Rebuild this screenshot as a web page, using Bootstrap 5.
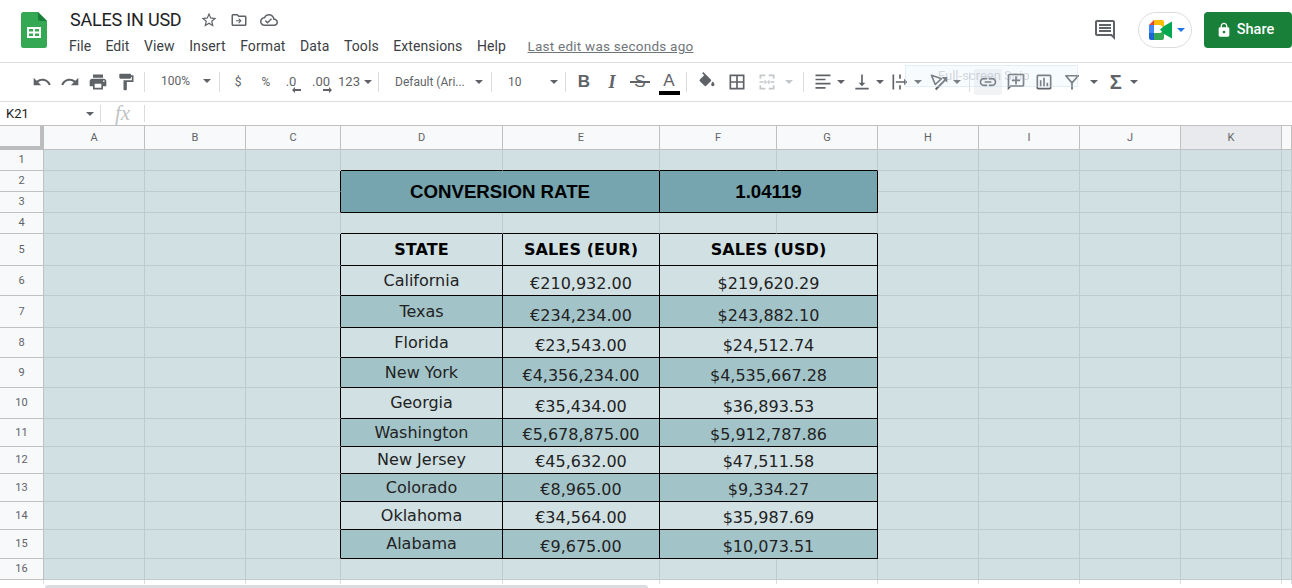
<!DOCTYPE html>
<html lang="en">
<head>
  <meta charset="UTF-8">
  <meta name="viewport" content="width=device-width, initial-scale=1, shrink-to-fit=no">
  <title>SALES IN USD - Google Sheets</title>
  <link href="https://cdn.jsdelivr.net/npm/bootstrap@5.3.0/dist/css/bootstrap.min.css" rel="stylesheet">
  <style>
    body { height: 588px; overflow: hidden; background: #fff; font-family: Roboto, "Liberation Sans", sans-serif; color: #3c4043; }
    svg { display: block; fill: #5f6368; }

    .app-bar { height: 63px; border-bottom: 1px solid #dadce0; }
    .app-logo { left: 21px; top: 12px; }
    .doc-title { margin: 0 0 0 70px; padding-top: 4px; height: 36px; }
    .doc-name { font-size: 18px; line-height: 22px; color: #202124; letter-spacing: -.2px; margin-right: 19px; }
    .title-icon { margin-right: 12px; }
    .menu-row { padding-left: 69px; font-size: 14px; line-height: 20px; letter-spacing: .1px; color: #3c4043; }
    .menu-row span { margin-right: 14.5px; }
    .menu-row span:first-child { margin-right: 14px; }
    .menu-row .last-edit { margin-left: 7px; color: #70757a; text-decoration: underline; font-size: 13.5px; letter-spacing: .24px; }
    .bar-right { right: 0; top: 12px; }
    .comment-btn { margin-right: 21px; }
    .meet-pill { width: 54px; height: 36px; border: 1px solid #dadce0; border-radius: 18px; padding-left: 10px; margin-right: 12px; }
    .share-btn { width: 88px; height: 36px; background: #188038; color: #fff; border-radius: 4px; font-weight: 500; font-size: 14.5px; padding: 0 6px 0 0; border: 0; gap: 5px; }
    .share-btn svg { fill: #fff; }

    .tool-bar { height: 39px; border-bottom: 1px solid #dadce0; padding-left: 28px; font-size: 12px; color: #5f6368; }
    .tool { width: 28px; height: 26px; flex: none; }
    .tool-active { background: #f1f3f4; border-radius: 2px; }
    .tool-off svg { fill: #c4c7c9; }
    .tool-gap { width: 2px; flex: none; }
    .tool-sep { width: 1px; height: 20px; background: #dadce0; margin: 0 4px; flex: none; }
    .tool-sep-wide { margin-left: 6px; }
    .tool-sep-tight { margin-left: 1px; }
    .caret { width: 0; height: 0; border: 4px solid transparent; border-top: 4px solid #5f6368; border-bottom: 0; flex: none; }
    .caret-off { border-top-color: #c4c7c9; }
    .caret-blue { border-top-color: #1a73e8; }
    .tb-zoom { width: 66px; padding: 0 4px 2px 12px; }
    .tb-font { width: 104px; padding: 0 4px 0 12px; }
    .tb-size { width: 65px; padding: 0 3px 0 12px; }
    .tb-num { width: 38px; font-size: 13px; }
    .tb-drop { width: 38.7px; flex: none; }
    .tb-small { width: 16px; flex: none; }
    .tb-first { margin-left: 5px; }
    .letter { font-family: "Liberation Sans", sans-serif; font-size: 17px; line-height: 20px; color: #5f6368; }
    .letter-i { font-family: "Liberation Serif", serif; font-weight: 700; font-style: italic; font-size: 18px; }
    .letter-s { position: relative; padding: 0 3px; }
    .letter-s::after { content: ""; position: absolute; left: -1px; right: -1px; top: 9px; height: 2px; background: #5f6368; }
    .letter-a { border-bottom: 4px solid #000; width: 21px; text-align: center; line-height: 19px; height: 24px; margin: 1px 0 0 2px; font-weight: 400; }
    .num-tag { position: relative; font-size: 13px; }
    .num-one { margin-right: 6px; }
    .num-two { margin-right: 2px; }
    .num-arrow { position: absolute; bottom: -1px; }
    .num-one .num-arrow { right: -6px; }
    .num-two .num-arrow { right: -2px; }
    .sigma { font-size: 20px; font-family: "Liberation Sans", sans-serif; font-weight: 700; }
    .snip-ghost { left: 905px; top: 2px; width: 173px; height: 22px; background: rgba(225, 238, 250, .22); border: 1px solid rgba(190, 215, 240, .35); color: rgba(150, 160, 170, .4); font-size: 13px; padding-left: 32px; line-height: 20px; }

    .formula-bar { height: 24px; border-bottom: 1px solid #c0c0c0; font-size: 13px; }
    .cell-ref { width: 101px; padding: 0 6px; color: #202124; border-right: 1px solid #dadce0; height: 17px; }
    .fx-box { width: 44px; height: 17px; border-right: 1px solid #dadce0; color: #c0c3c5; font-family: "Liberation Serif", serif; font-style: italic; font-size: 21px; line-height: 17px; }

    .sheet { border-collapse: separate; border-spacing: 0; table-layout: fixed; width: 1292px; font-family: "DejaVu Sans", sans-serif; font-size: 16px; line-height: 18px; color: #222; }
    .sheet td, .sheet th { padding: 0; border-right: 1px solid #bfcccf; border-bottom: 1px solid #bfcccf; background: #d0e0e3; text-align: center; font-weight: 400; overflow: hidden; white-space: nowrap; }
    .sheet .col-hd { background: #f8f9fa; border-right-color: #c0c0c0; border-bottom-color: #c0c0c0; font-family: Roboto, sans-serif; font-size: 11px; color: #5f6368; }
    .sheet .col-on { background: #e8eaed; }
    .sheet .corner { background: #f8f9fa; border-right: 4px solid #bdbdbd; border-bottom: 4px solid #bdbdbd; }
    .sheet .row-hd { background: #f8f9fa; border-right-color: #c0c0c0; border-bottom-color: #c0c0c0; font-family: Roboto, sans-serif; font-size: 11px; color: #5f6368; }
    .sheet .kr { border-right-color: #000; }
    .sheet .kb { border-bottom-color: #000; }
    .sheet .rate { background: #76a5af; border-right-color: #000; border-bottom-color: #000; font-family: "Liberation Sans", sans-serif; font-weight: 700; font-size: 18.67px; color: #000; }
    .sheet .head { font-weight: 700; color: #000; letter-spacing: .1px; border-right-color: #000; border-bottom-color: #000; }
    .sheet .st { border-right-color: #000; border-bottom-color: #000; }
    .sheet .amt { border-right-color: #000; border-bottom-color: #000; vertical-align: bottom; padding-bottom: 2px; }
    .sheet .band { background: #a2c4c9; }
    .sheet .blank { background: #fff; border-bottom: 0; border-right-color: #dadce0; }
    .h24 { height: 24px; } .h21 { height: 21px; } .h32 { height: 32px; } .h30 { height: 30px; }
    .h31 { height: 31px; } .h28 { height: 28px; } .h27 { height: 27px; } .h29 { height: 29px; } .h4 { height: 4px; }
    .scroll-track { padding: 1px 0 0 45px; }
    .scroll-thumb { width: 603px; height: 4px; background: #dadce0; border-radius: 3px 3px 0 0; }
  </style>
</head>
<body>

<header class="app-bar position-relative">
  <svg class="app-logo position-absolute" width="26" height="36" viewBox="0 0 26 36">
    <path d="M2.500 0H17l9 9v24.500a2.500 2.500 0 0 1-2.500 2.500h-21A2.500 2.500 0 0 1 0 33.500v-31A2.500 2.500 0 0 1 2.500 0z" fill="#34a853"/>
    <path d="M17 0l9 9h-6.500A2.500 2.500 0 0 1 17 6.500z" fill="#188038"/>
    <path d="M6 15h14v11H6zm2 2v2.500h4V17zm6 0v2.500h4V17zM8 21.500V24h4v-2.500zm6 0V24h4v-2.500z" fill="#fff" fill-rule="evenodd"/>
  </svg>
  <div class="doc-title d-flex align-items-center">
    <span class="doc-name">SALES IN USD</span>
    <svg class="title-icon" width="18" height="18" viewBox="0 0 24 24"><path d="M22 9.240l-7.190-.62L12 2 9.190 8.630 2 9.240l5.460 4.730L5.820 21 12 17.270 18.180 21l-1.630-7.030L22 9.240zM12 15.400l-3.760 2.270 1-4.280-3.320-2.880 4.380-.38L12 6.100l1.710 4.040 4.380.38-3.320 2.880 1 4.280L12 15.400z"/></svg>
    <svg class="title-icon" width="18" height="18" viewBox="0 0 24 24"><path d="M20 6h-8l-2-2H4c-1.100 0-1.990.9-1.990 2L2 18c0 1.100.9 2 2 2h16c1.100 0 2-.9 2-2V8c0-1.100-.9-2-2-2zm0 12H4V6h5.170l2 2H20v10z"/><path d="M12 9.500l-1 1 1.800 1.800H8v1.400h4.800L11 15.500l1 1 3.500-3.500z"/></svg>
    <svg width="18" height="18" viewBox="0 0 24 24"><path d="M19.350 10.040C18.670 6.590 15.640 4 12 4 9.110 4 6.600 5.640 5.350 8.040 2.340 8.360 0 10.910 0 14c0 3.310 2.690 6 6 6h13c2.760 0 5-2.240 5-5 0-2.640-2.050-4.780-4.650-4.960zM19 18H6c-2.210 0-4-1.790-4-4 0-2.050 1.530-3.760 3.560-3.970l1.070-.11.5-.95C8.080 7.140 9.940 6 12 6c2.620 0 4.880 1.860 5.390 4.430l.3 1.500 1.530.11c1.560.1 2.780 1.410 2.780 2.960 0 1.650-1.350 3-3 3zm-9-3.820l-2.090-2.090L6.500 13.500 10 17l6.010-6.010-1.410-1.410z"/></svg>
  </div>
  <nav class="menu-row d-flex">
    <span>File</span><span>Edit</span><span>View</span><span>Insert</span><span>Format</span><span>Data</span><span>Tools</span><span>Extensions</span><span>Help</span><span class="last-edit">Last edit was seconds ago</span>
  </nav>
  <div class="bar-right position-absolute d-flex align-items-center">
    <svg class="comment-btn" width="24" height="24" viewBox="0 0 24 24"><path d="M21.990 4c0-1.100-.89-2-1.990-2H4c-1.100 0-2 .9-2 2v12c0 1.100.9 2 2 2h14l4 4-.01-18zM20 4v13.170L18.830 16H4V4h16zM6 12h12v2H6zm0-3h12v2H6zm0-3h12v2H6z"/></svg>
    <div class="meet-pill d-flex align-items-center gap-1">
      <svg width="24" height="20" viewBox="0 0 24 20">
        <path d="M5 0L0 5h5z" fill="#ea4335"/>
        <path d="M5 0h8a2 2 0 0 1 2 2v5.500L11 5H5z" fill="#fbbc04"/>
        <path d="M0 5h5v8H0z" fill="#4285f4"/>
        <path d="M0 13h5v7H2a2 2 0 0 1-2-2z" fill="#1967d2"/>
        <path d="M5 13h6l4-2v7a2 2 0 0 1-2 2H5z" fill="#34a853"/>
        <path d="M11 9.500L15 6l8-4.500v17L15 14z" fill="#00a94f"/>
        <path d="M5 5h6v8H5z" fill="#fff"/>
      </svg>
      <span class="caret caret-blue"></span>
    </div>
    <button class="share-btn d-flex align-items-center justify-content-center" type="button">
      <svg width="16" height="16" viewBox="0 0 24 24"><path d="M18 8h-1V6c0-2.760-2.240-5-5-5S7 3.240 7 6v2H6c-1.100 0-2 .9-2 2v10c0 1.100.9 2 2 2h12c1.100 0 2-.9 2-2V10c0-1.100-.9-2-2-2zm-6 9c-1.100 0-2-.9-2-2s.9-2 2-2 2 .9 2 2-.9 2-2 2zm3.100-9H8.900V6c0-1.710 1.390-3.100 3.100-3.100 1.710 0 3.100 1.390 3.100 3.100v2z"/></svg>
      Share
    </button>
  </div>
</header>

<div class="tool-bar d-flex align-items-center position-relative">
  <div class="tool d-flex align-items-center justify-content-center"><svg width="20" height="20" viewBox="0 0 24 24"><path d="M12.500 8c-2.650 0-5.050.99-6.900 2.600L2 7v9h9l-3.620-3.620c1.390-1.160 3.160-1.880 5.120-1.880 3.540 0 6.550 2.310 7.600 5.500l2.370-.78C21.080 11.030 17.150 8 12.500 8z"/></svg></div>
  <div class="tool d-flex align-items-center justify-content-center"><svg width="20" height="20" viewBox="0 0 24 24"><path d="M18.400 10.600C16.550 8.990 14.150 8 11.500 8c-4.650 0-8.580 3.030-9.960 7.220L3.900 16c1.050-3.190 4.050-5.500 7.600-5.500 1.950 0 3.730.72 5.120 1.880L13 16h9V7l-3.600 3.600z"/></svg></div>
  <div class="tool d-flex align-items-center justify-content-center"><svg width="20" height="20" viewBox="0 0 24 24"><path d="M19 8H5c-1.660 0-3 1.340-3 3v6h4v4h12v-4h4v-6c0-1.660-1.340-3-3-3zm-3 11H8v-5h8v5zm3-7c-.55 0-1-.45-1-1s.45-1 1-1 1 .45 1 1-.45 1-1 1zm-1-9H6v4h12V3z"/></svg></div>
  <div class="tool d-flex align-items-center justify-content-center"><svg width="20" height="20" viewBox="0 0 24 24"><path d="M18 4V3c0-.55-.45-1-1-1H5c-.55 0-1 .45-1 1v4c0 .55.45 1 1 1h12c.55 0 1-.45 1-1V6h1v4H9v11c0 .55.45 1 1 1h2c.55 0 1-.45 1-1v-9h8V4h-3z"/></svg></div>
  <span class="tool-sep"></span>
  <div class="tb-zoom d-flex align-items-center justify-content-between"><span>100%</span><span class="caret"></span></div>
  <span class="tool-sep"></span>
  <div class="tool d-flex align-items-center justify-content-center"><span>$</span></div>
  <div class="tool d-flex align-items-center justify-content-center"><span>%</span></div>
  <div class="tool d-flex align-items-center justify-content-center"><span class="num-tag num-one">.0<svg class="num-arrow" width="10" height="6" viewBox="0 0 10 6"><path d="M0 3l3-3v2h6v2H3v2z"/></svg></span></div>
  <div class="tool d-flex align-items-center justify-content-center"><span class="num-tag num-two">.00<svg class="num-arrow" width="10" height="6" viewBox="0 0 10 6"><path d="M10 3L7 0v2H1v2h6v2z"/></svg></span></div>
  <div class="tb-num d-flex align-items-center justify-content-center gap-1"><span>123</span><span class="caret"></span></div>
  <span class="tool-sep"></span>
  <div class="tb-font d-flex align-items-center justify-content-between"><span>Default (Ari...</span><span class="caret"></span></div>
  <span class="tool-sep"></span>
  <div class="tb-size d-flex align-items-center justify-content-between"><span>10</span><span class="caret"></span></div>
  <span class="tool-sep"></span>
  <div class="tool d-flex align-items-center justify-content-center"><span class="letter fw-bold">B</span></div>
  <div class="tool d-flex align-items-center justify-content-center"><span class="letter letter-i">I</span></div>
  <div class="tool d-flex align-items-center justify-content-center"><span class="letter letter-s">S</span></div>
  <div class="tool d-flex align-items-center justify-content-center"><span class="letter letter-a">A</span></div>
  <span class="tool-sep"></span>
  <span class="tool-gap"></span>
  <div class="tool d-flex align-items-center justify-content-center"><svg width="20" height="20" viewBox="0 0 24 24"><path d="M16.560 8.940L7.620 0 6.210 1.410l2.380 2.380-5.150 5.150c-.59.59-.59 1.540 0 2.120l5.500 5.500c.29.29.68.44 1.060.44s.77-.15 1.060-.44l5.500-5.500c.59-.58.59-1.530 0-2.120zM19 11.500s-2 2.170-2 3.500c0 1.100.9 2 2 2s2-.9 2-2c0-1.330-2-3.500-2-3.500z"/></svg></div>
  <span class="tool-gap"></span>
  <div class="tool d-flex align-items-center justify-content-center"><svg width="20" height="20" viewBox="0 0 24 24"><path d="M3 3v18h18V3H3zm8 16H5v-6h6v6zm0-8H5V5h6v6zm8 8h-6v-6h6v6zm0-8h-6V5h6v6z"/></svg></div>
  <span class="tool-gap"></span>
  <div class="tool tool-off d-flex align-items-center justify-content-center"><svg width="20" height="20" viewBox="0 0 24 24"><path d="M3 3h7v2H5v3H3zM14 3h7v5h-2V5h-5zM3 16h2v3h5v2H3zM19 16h2v5h-7v-2h5zM3 11h5v2H3zM16 11h5v2h-5zM9 9l3 3-3 3zM15 9l-3 3 3 3z"/></svg></div>
  <div class="tb-small d-flex align-items-center justify-content-center"><span class="caret caret-off"></span></div>
  <span class="tool-sep tool-sep-wide"></span>
  <div class="tb-drop tb-first d-flex align-items-center gap-1"><svg width="20" height="20" viewBox="0 0 24 24"><path d="M3 3h18v2H3zM3 8h12v2H3zM3 13h18v2H3zM3 18h12v2H3z"/></svg><span class="caret"></span></div>
  <div class="tb-drop d-flex align-items-center gap-1"><svg width="20" height="20" viewBox="0 0 24 24"><path d="M16 13h-3V3h-2v10H8l4 4 4-4zM4 19v2h16v-2H4z"/></svg><span class="caret"></span></div>
  <div class="tb-drop d-flex align-items-center gap-1"><svg width="20" height="20" viewBox="0 0 24 24"><path d="M3 3h2v18H3zM11 3h2v5h-2zM11 16h2v5h-2zM7 11h10V8l4 4-4 4v-3H7z"/></svg><span class="caret"></span></div>
  <div class="tb-drop d-flex align-items-center gap-1"><svg width="20" height="20" viewBox="0 0 24 24"><path d="M3 4l12 4-7.500 7z" fill="none" stroke="#5f6368" stroke-width="2" stroke-linejoin="round"/><path d="M8 21L21 8" fill="none" stroke="#5f6368" stroke-width="2.400"/><path d="M15 6h7v7z"/></svg><span class="caret"></span></div>
  <span class="tool-sep tool-sep-tight"></span>
  <div class="tool tool-active d-flex align-items-center justify-content-center"><svg width="20" height="20" viewBox="0 0 24 24"><path d="M3.900 12c0-1.710 1.390-3.100 3.100-3.100h4V7H7c-2.760 0-5 2.240-5 5s2.240 5 5 5h4v-1.900H7c-1.710 0-3.100-1.390-3.100-3.100zM8 13h8v-2H8v2zm9-6h-4v1.900h4c1.710 0 3.100 1.390 3.100 3.100s-1.390 3.100-3.100 3.100h-4V17h4c2.760 0 5-2.240 5-5s-2.240-5-5-5z"/></svg></div>
  <div class="tool d-flex align-items-center justify-content-center"><svg width="20" height="20" viewBox="0 0 24 24"><path d="M20 2H4c-1.100 0-2 .9-2 2v18l4-4h14c1.100 0 2-.9 2-2V4c0-1.100-.9-2-2-2zm0 14H5.170L4 17.170V4h16v12zM11 5h2v4h4v2h-4v4h-2v-4H7V9h4z"/></svg></div>
  <div class="tool d-flex align-items-center justify-content-center"><svg width="20" height="20" viewBox="0 0 24 24"><path d="M19 3H5c-1.100 0-2 .9-2 2v14c0 1.100.9 2 2 2h14c1.100 0 2-.9 2-2V5c0-1.100-.9-2-2-2zm0 16H5V5h14v14zM7 10h2v7H7zM11 7h2v10h-2zM15 13h2v4h-2z"/></svg></div>
  <div class="tool d-flex align-items-center justify-content-center"><svg width="20" height="20" viewBox="0 0 24 24"><path d="M4.500 4.500h15L12 13z" fill="none" stroke="#5f6368" stroke-width="2" stroke-linejoin="round"/><path d="M11 12h2v9h-2z"/></svg></div>
  <div class="tb-small d-flex align-items-center justify-content-center"><span class="caret"></span></div>
  <div class="tool d-flex align-items-center justify-content-center"><span class="sigma">Σ</span></div>
  <span class="caret"></span>
  <div class="snip-ghost position-absolute">Full-screen Snip</div>
</div>

<div class="formula-bar d-flex align-items-center">
  <div class="cell-ref d-flex align-items-center justify-content-between"><span>K21</span><span class="caret"></span></div>
  <div class="fx-box text-center">fx</div>
</div>

<table class="sheet">
  <colgroup>
    <col style="width:44px"><col style="width:101px"><col style="width:101px"><col style="width:95px"><col style="width:162px"><col style="width:157px"><col style="width:117px"><col style="width:101px"><col style="width:101px"><col style="width:101px"><col style="width:101px"><col style="width:101px"><col style="width:10px">
  </colgroup>
  <tr class="h24"><th class="corner"></th><th class="col-hd">A</th><th class="col-hd">B</th><th class="col-hd">C</th><th class="col-hd">D</th><th class="col-hd">E</th><th class="col-hd">F</th><th class="col-hd">G</th><th class="col-hd">H</th><th class="col-hd">I</th><th class="col-hd">J</th><th class="col-hd col-on">K</th><th class="col-hd"></th></tr>
  <tr class="h21"><td class="row-hd">1</td><td></td><td></td><td></td><td class="kb"></td><td class="kb"></td><td class="kb"></td><td class="kb"></td><td></td><td></td><td></td><td></td><td></td></tr>
  <tr class="h21"><td class="row-hd">2</td><td></td><td></td><td class="kr"></td><td class="rate" colspan="2" rowspan="2">CONVERSION RATE</td><td class="rate" colspan="2" rowspan="2">1.04119</td><td></td><td></td><td></td><td></td><td></td></tr>
  <tr class="h21"><td class="row-hd">3</td><td></td><td></td><td class="kr"></td><td></td><td></td><td></td><td></td><td></td></tr>
  <tr class="h21"><td class="row-hd">4</td><td></td><td></td><td></td><td class="kb"></td><td class="kb"></td><td class="kb"></td><td class="kb"></td><td></td><td></td><td></td><td></td><td></td></tr>
  <tr class="h32"><td class="row-hd">5</td><td></td><td></td><td class="kr"></td><td class="head">STATE</td><td class="head">SALES (EUR)</td><td class="head" colspan="2">SALES (USD)</td><td></td><td></td><td></td><td></td><td></td></tr>
  <tr class="h30"><td class="row-hd">6</td><td></td><td></td><td class="kr"></td><td class="st">California</td><td class="amt">€210,932.00</td><td class="amt" colspan="2">$219,620.29</td><td></td><td></td><td></td><td></td><td></td></tr>
  <tr class="h32"><td class="row-hd">7</td><td></td><td></td><td class="kr"></td><td class="st band">Texas</td><td class="amt band">€234,234.00</td><td class="amt band" colspan="2">$243,882.10</td><td></td><td></td><td></td><td></td><td></td></tr>
  <tr class="h30"><td class="row-hd">8</td><td></td><td></td><td class="kr"></td><td class="st">Florida</td><td class="amt">€23,543.00</td><td class="amt" colspan="2">$24,512.74</td><td></td><td></td><td></td><td></td><td></td></tr>
  <tr class="h30"><td class="row-hd">9</td><td></td><td></td><td class="kr"></td><td class="st band">New York</td><td class="amt band">€4,356,234.00</td><td class="amt band" colspan="2">$4,535,667.28</td><td></td><td></td><td></td><td></td><td></td></tr>
  <tr class="h31"><td class="row-hd">10</td><td></td><td></td><td class="kr"></td><td class="st">Georgia</td><td class="amt">€35,434.00</td><td class="amt" colspan="2">$36,893.53</td><td></td><td></td><td></td><td></td><td></td></tr>
  <tr class="h28"><td class="row-hd">11</td><td></td><td></td><td class="kr"></td><td class="st band">Washington</td><td class="amt band">€5,678,875.00</td><td class="amt band" colspan="2">$5,912,787.86</td><td></td><td></td><td></td><td></td><td></td></tr>
  <tr class="h27"><td class="row-hd">12</td><td></td><td></td><td class="kr"></td><td class="st">New Jersey</td><td class="amt">€45,632.00</td><td class="amt" colspan="2">$47,511.58</td><td></td><td></td><td></td><td></td><td></td></tr>
  <tr class="h28"><td class="row-hd">13</td><td></td><td></td><td class="kr"></td><td class="st band">Colorado</td><td class="amt band">€8,965.00</td><td class="amt band" colspan="2">$9,334.27</td><td></td><td></td><td></td><td></td><td></td></tr>
  <tr class="h28"><td class="row-hd">14</td><td></td><td></td><td class="kr"></td><td class="st">Oklahoma</td><td class="amt">€34,564.00</td><td class="amt" colspan="2">$35,987.69</td><td></td><td></td><td></td><td></td><td></td></tr>
  <tr class="h29"><td class="row-hd">15</td><td></td><td></td><td class="kr"></td><td class="st band">Alabama</td><td class="amt band">€9,675.00</td><td class="amt band" colspan="2">$10,073.51</td><td></td><td></td><td></td><td></td><td></td></tr>
  <tr class="h21"><td class="row-hd">16</td><td></td><td></td><td></td><td></td><td></td><td></td><td></td><td></td><td></td><td></td><td></td><td></td></tr>
  <tr class="h4"><td class="blank"></td><td class="blank"></td><td class="blank"></td><td class="blank"></td><td class="blank"></td><td class="blank"></td><td class="blank"></td><td class="blank"></td><td class="blank"></td><td class="blank"></td><td class="blank"></td><td class="blank"></td><td class="blank"></td></tr>
</table>
<div class="scroll-track"><div class="scroll-thumb"></div></div>

<script src="https://cdn.jsdelivr.net/npm/bootstrap@5.3.0/dist/js/bootstrap.bundle.min.js"></script>
</body>
</html>
